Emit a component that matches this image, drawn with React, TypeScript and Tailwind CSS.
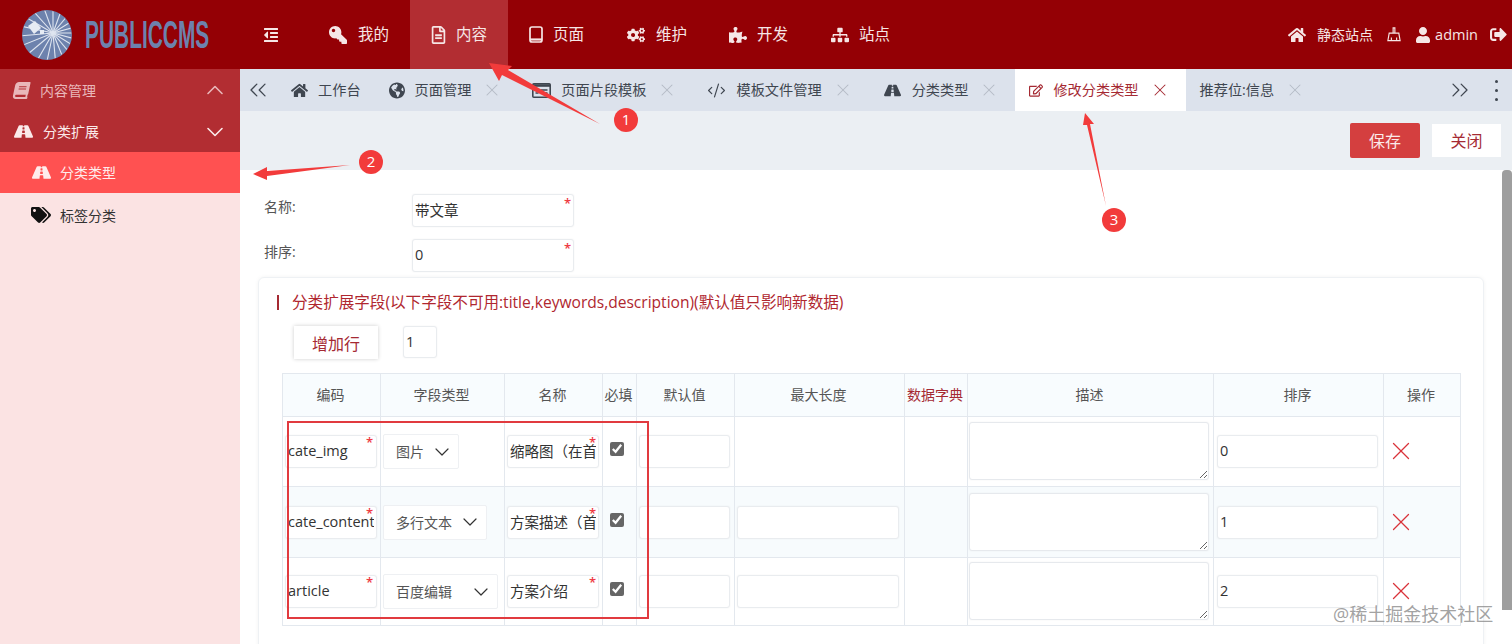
import React from "react";
import {
  FaBook, FaCogs, FaGlobeAmericas, FaHome, FaKey, FaOutdent, FaPuzzlePiece, FaRegEdit, FaRegFileAlt,
  FaRoad, FaSignOutAlt, FaSitemap, FaTags, FaUser,
} from "react-icons/fa";
import { ChevronDown, ChevronUp, ChevronsLeft, ChevronsRight, CodeXml, X } from "lucide-react";

function Logo() {
  const rays = [0, 15, 32, 50, 68, 85, 102, 120, 140, 158, 175, 192, 210, 228, 250, 270, 290, 310, 328, 345];
  return (
    <svg width="50" height="50" viewBox="0 0 50 50" className="shrink-0">
      <defs>
        <clipPath id="logo-clip">
          <circle cx="25" cy="25" r="24.5" />
        </clipPath>
      </defs>
      <circle cx="25" cy="25" r="25" fill="#6d82ad" />
      <g clipPath="url(#logo-clip)">
        {rays.map((a) => (
          <line
            key={a}
            x1="31"
            y1="23"
            x2={31 + 50 * Math.cos((a * Math.PI) / 180)}
            y2={23 + 50 * Math.sin((a * Math.PI) / 180)}
            stroke="#dfe5f0"
            strokeWidth="1.1"
          />
        ))}
      </g>
      <path d="M6 16l7-5 6 7-7 6z" fill="#e6ebf4" />
      <rect x="18" y="20" width="4" height="4" fill="#e6ebf4" />
    </svg>
  );
}

function Tablet() {
  return (
    <svg width="14" height="17" viewBox="0 0 14 17" fill="none" stroke="currentColor" strokeWidth="1.7">
      <rect x="1" y="1" width="12" height="15" rx="2" />
      <path d="M1 13.5h12" strokeWidth="2.2" />
    </svg>
  );
}

function TemplateIcon() {
  return (
    <svg width="19" height="15" viewBox="0 0 19 15" fill="none" stroke="currentColor">
      <rect x="0.8" y="0.8" width="17.4" height="13.4" rx="1" strokeWidth="1.6" />
      <path d="M1 2.5h17" strokeWidth="2.6" />
      <path d="M3.5 7h3M3.5 10h3M8.5 7h7M8.5 10h7" strokeWidth="1.6" />
    </svg>
  );
}

function NavItem({ icon, label, w, active }: { icon: React.ReactNode; label: string; w: string; active?: boolean }) {
  return (
    <div className={`flex h-full items-center gap-[10px] px-[21px] ${active ? "bg-[#b22d32]" : ""}`}>
      <span className={`flex justify-center text-[18px] ${w}`}>{icon}</span>
      <span className="text-[15.5px]">{label}</span>
    </div>
  );
}

function Tab({ icon, w = "", label, closable = true, active }: { icon?: React.ReactNode; w?: string; label: string; closable?: boolean; active?: boolean }) {
  return (
    <div
      className={`flex h-full shrink-0 items-center pl-[14px] ${closable ? "pr-[20px]" : "pr-[14px]"} ${active ? "bg-white text-[#a52a33]" : "text-[#3f4650]"}`}
    >
      {icon && <span className={`mr-[10px] flex justify-center text-[17px] leading-none ${w}`}>{icon}</span>}
      <span className="text-[14.2px]">{label}</span>
      {closable && (
        <X size={20} strokeWidth={1.25} className={`ml-[11px] -mr-[4px] ${active ? "text-[#a52a33]" : "text-[#b4bbc6]"}`} />
      )}
    </div>
  );
}

function Star({ className = "top-[3px] right-[3px]" }: { className?: string }) {
  return <span className={`pointer-events-none absolute text-[13px] font-semibold leading-none text-[#ee3a43] ${className}`}>*</span>;
}

function Field({ value = "", className = "", star, starClass }: { value?: string; className?: string; star?: boolean; starClass?: string }) {
  return (
    <div className={`relative ${className}`}>
      <input
        readOnly
        value={value}
        className="h-full w-full rounded-[3px] border border-[#e9ecef] bg-white px-[2px] pb-[2px] text-[14.5px] text-[#333] shadow-[0_0_2px_rgba(0,0,0,0.06)] outline-none"
      />
      {star && <Star className={starClass} />}
    </div>
  );
}

function SelectBox({ label, w }: { label: string; w: string }) {
  return (
    <div className={`flex h-[35px] items-center justify-between rounded-[2px] border border-[#eef0f3] bg-white pl-[12px] pr-[4px] text-[14px] text-[#555] ${w}`}>
      <span>{label}</span>
      <ChevronDown size={24} strokeWidth={1.2} className="text-[#333]" />
    </div>
  );
}

const th = "border border-[#e3e8ee] bg-[#f8fcfe] pb-[1px] pr-[2px] text-center text-[14px] font-normal text-[#555]";
const td = "border border-[#e3e8ee] p-0 align-middle";

const rows = [
  { h: "h-[70px]", code: "cate_img", sel: "图片", selW: "w-[76px]", name: "缩略图（在首", max: false, sort: "0", bg: "bg-white" },
  { h: "h-[71px]", code: "cate_content", sel: "多行文本", selW: "w-[104px]", name: "方案描述（首", max: true, sort: "1", bg: "bg-[#f7fbfd]" },
  { h: "h-[68px]", code: "article", sel: "百度编辑", selW: "w-[115px]", name: "方案介绍", max: true, sort: "2", bg: "bg-white" },
];

function Broom() {
  return (
    <svg width="14" height="17" viewBox="0 0 16 17" fill="none" stroke="currentColor" strokeWidth="1.3">
      <path d="M7 1h2v6H7zM2.5 7h11L15 15.5H1zM5 15.5V12M11 15.5V12" />
    </svg>
  );
}

export default function App() {
  return (
    <div className="relative flex h-[644px] w-[1512px] flex-col overflow-hidden bg-white font-['Open_Sans','Noto_Sans_CJK_SC',sans-serif]">
      <header className="flex h-[69px] shrink-0 items-center bg-[#940005] text-[#f6e6e6]">
        <div className="flex w-[251px] items-center pl-[22px]">
          <Logo />
          <span className="ml-[13px] origin-left scale-x-[0.55] font-['Liberation_Sans',sans-serif] text-[38px] font-bold leading-none text-[#6d82ad]">
            PUBLICCMS
          </span>
        </div>
        <FaOutdent className="ml-[12px] text-[16px]" />
        <div className="ml-[28px] flex h-full items-center">
          <NavItem icon={<FaKey className="-scale-x-100" />} w="w-[20px]" label="我的" />
          <NavItem icon={<FaRegFileAlt />} w="w-[15px]" label="内容" active />
          <NavItem icon={<Tablet />} w="w-[14px]" label="页面" />
          <NavItem icon={<FaCogs />} w="w-[20px]" label="维护" />
          <NavItem icon={<FaPuzzlePiece />} w="w-[18px]" label="开发" />
          <NavItem icon={<FaSitemap />} w="w-[19px]" label="站点" />
        </div>
        <div className="ml-auto flex items-center pr-[5px] text-[14px]">
          <FaHome className="text-[18px]" />
          <span className="ml-[11px]">静态站点</span>
          <span className="ml-[14px]"><Broom /></span>
          <FaUser className="ml-[14px] text-[16px]" />
          <span className="ml-[4px] text-[14.5px]">admin</span>
          <FaSignOutAlt className="ml-[12px] text-[17px]" />
        </div>
      </header>

      <div className="flex min-h-0 flex-1">
        <aside className="w-[240px] shrink-0 bg-[#fbe3e3] text-[14px]">
          <div className="flex h-[42px] items-center bg-[#b22d32] pl-[13px] pr-[11px] text-[#e9b7b9]">
            <FaBook className="-skew-x-12 text-[17px]" />
            <span className="ml-[10px]">内容管理</span>
            <ChevronUp size={28} strokeWidth={1.4} className="ml-auto" />
          </div>
          <div className="flex h-[41px] items-center bg-[#b22d32] pl-[14px] pr-[11px] text-[#fbeaea]">
            <FaRoad className="text-[19px]" />
            <span className="ml-[10px]">分类扩展</span>
            <ChevronDown size={28} strokeWidth={1.4} className="ml-auto" />
          </div>
          <div className="flex h-[41px] items-center bg-[#ff5151] pl-[32px] text-[#ffecec]">
            <FaRoad className="text-[19px]" />
            <span className="ml-[9px]">分类类型</span>
          </div>
          <div className="flex h-[44px] items-center pl-[31px] text-[#333]">
            <FaTags className="text-[20px] text-[#111]" />
            <span className="ml-[9px]">标签分类</span>
          </div>
        </aside>

        <main className="min-w-0 flex-1">
          <div className="flex h-[42px] items-center bg-[#dce2ec]">
            <ChevronsLeft size={28} strokeWidth={1.1} className="ml-[4px] text-[#3f4650]" />
            <div className="ml-[4px] flex h-full flex-1 items-center">
              <Tab icon={<FaHome />} w="w-[18px]" label="工作台" closable={false} />
              <Tab icon={<FaGlobeAmericas />} w="w-[16px]" label="页面管理" />
              <Tab icon={<TemplateIcon />} w="w-[19px]" label="页面片段模板" />
              <Tab icon={<CodeXml size={21} strokeWidth={1.5} />} w="w-[19px]" label="模板文件管理" />
              <Tab icon={<FaRoad />} w="w-[19px]" label="分类类型" />
              <Tab icon={<FaRegEdit className="text-[15px]" />} w="w-[14px]" label="修改分类类型" active />
              <Tab label="推荐位:信息" />
            </div>
            <ChevronsRight size={28} strokeWidth={1.1} className="mr-[21px] text-[#3f4650]" />
            <div className="mr-[14px] flex flex-col gap-[6px]">
              <span className="size-[3px] rounded-full bg-[#3f4650]" />
              <span className="size-[3px] rounded-full bg-[#3f4650]" />
              <span className="size-[3px] rounded-full bg-[#3f4650]" />
            </div>
          </div>

          <div className="flex h-[59px] items-center justify-end gap-[12px] bg-[#ebeff3] pr-[11px]">
            <button className="h-[35px] w-[70px] rounded-[2px] bg-[#d43f3f] text-[16px] text-[#fbeaea]">保存</button>
            <button className="h-[33px] w-[69px] bg-white text-[16px] text-[#a52a33]">关闭</button>
          </div>

          <div className="pl-[18px] pt-[24px]">
            <div className="flex h-[33px] items-start">
              <label className="mt-[2px] w-[154px] pl-[6px] text-[14px] text-[#555]">名称:</label>
              <Field value="带文章" star className="h-[33px] w-[162px]" />
            </div>
            <div className="mt-[12px] flex h-[33px] items-start">
              <label className="mt-[2px] w-[154px] pl-[6px] text-[14px] text-[#555]">排序:</label>
              <Field value="0" star className="h-[33px] w-[162px]" />
            </div>

            <section className="mt-[5px] h-[400px] w-[1226px] rounded-[6px] border border-[#eef1f4] pl-[18px] pt-[13px] shadow-[0_0_4px_rgba(0,0,0,0.05)]">
              <div className="flex items-center">
                <span className="mr-[13px] h-[15px] w-[2px] bg-[#a52a33]" />
                <span className="text-[15.6px] tracking-[-0.02px] text-[#b0272f]">
                  分类扩展字段(以下字段不可用:title,keywords,description)(默认值只影响新数据)
                </span>
              </div>
              <div className="mt-[12px] flex pl-[17px]">
                <button className="h-[33px] w-[84px] bg-white pt-[3px] text-[16px] text-[#a52a33] shadow-[0_0_4px_rgba(0,0,0,0.2)]">增加行</button>
                <Field value="1" className="ml-[25px] h-[32px] w-[34px]" />
              </div>
              <table className="ml-[5px] mt-[14px] w-[1178px] table-fixed border-collapse">
                <colgroup>
                  <col className="w-[98px]" />
                  <col className="w-[124px]" />
                  <col className="w-[98px]" />
                  <col className="w-[34px]" />
                  <col className="w-[98px]" />
                  <col className="w-[170px]" />
                  <col className="w-[63px]" />
                  <col className="w-[246px]" />
                  <col className="w-[170px]" />
                  <col className="w-[77px]" />
                </colgroup>
                <thead>
                  <tr className="h-[43px]">
                    <th className={th}>编码</th>
                    <th className={th}>字段类型</th>
                    <th className={th}>名称</th>
                    <th className={th}>必填</th>
                    <th className={th}>默认值</th>
                    <th className={th}>最大长度</th>
                    <th className={`${th} !text-[#a52a33]`}>数据字典</th>
                    <th className={th}>描述</th>
                    <th className={th}>排序</th>
                    <th className={th}>操作</th>
                  </tr>
                </thead>
                <tbody>
                  {rows.map((r) => (
                    <tr key={r.code} className={`${r.h} ${r.bg}`}>
                      <td className={td}>
                        <Field value={r.code} star starClass="top-[1px] right-[4px]" className="ml-[2px] h-[33px] w-[92px]" />
                      </td>
                      <td className={td}>
                        <div className="pl-[2px]"><SelectBox label={r.sel} w={r.selW} /></div>
                      </td>
                      <td className={td}>
                        <Field value={r.name} star starClass="top-[1px] right-[3px]" className="ml-[2px] h-[33px] w-[92px]" />
                      </td>
                      <td className={td}>
                        <div className="flex pb-[5px] pl-[7px]">
                          <input type="checkbox" readOnly checked className="size-[14px] accent-[#666]" />
                        </div>
                      </td>
                      <td className={td}>
                        <Field className="ml-[2px] h-[33px] w-[91px]" />
                      </td>
                      <td className={td}>
                        {r.max && <Field className="ml-[2px] h-[33px] w-[162px]" />}
                      </td>
                      <td className={td} />
                      <td className={td}>
                        <textarea
                          readOnly
                          className="mb-[1px] ml-[1px] block h-[58px] w-[240px] rounded-[3px] border border-[#e6e9ed] bg-white shadow-[0_0_2px_rgba(0,0,0,0.06)] outline-none"
                        />
                      </td>
                      <td className={td}>
                        <Field value={r.sort} className="ml-[3px] h-[33px] w-[161px]" />
                      </td>
                      <td className={td}>
                        <X size={30} strokeWidth={1} className="mb-[1px] ml-[2px] text-[#d9333a]" />
                      </td>
                    </tr>
                  ))}
                </tbody>
              </table>
            </section>
          </div>
        </main>
      </div>

      {/* scrollbar */}
      <div className="absolute left-[1502px] top-[170px] h-[440px] w-[10px] rounded-t-[4px] bg-[#9e9e9e]" />

      {/* annotations drawn over the screenshot */}
      <svg className="pointer-events-none absolute inset-0" width="1512" height="644" viewBox="0 0 1512 644">
        <polygon points="489,63 512,66 508,70 600,124 502,75 499,81" fill="#f23b3b" />
        <polygon points="253,174 267,167 267,171 350,165 267,176 267,180" fill="#f23b3b" />
        <polygon points="1085,113 1094,124 1090,124 1106,206 1087,125 1083,125" fill="#f23b3b" />
        <circle cx="626" cy="120" r="12" fill="#f23b3b" />
        <circle cx="371" cy="162" r="12" fill="#f23b3b" />
        <circle cx="1114" cy="220" r="12" fill="#f23b3b" />
        <g fill="#ffffff" fontSize="15" textAnchor="middle" fontFamily="Open Sans, sans-serif">
          <text x="626" y="125">1</text>
          <text x="371" y="167">2</text>
          <text x="1114" y="225">3</text>
        </g>
        <rect x="288" y="422" width="360" height="196" fill="none" stroke="#e13a3f" strokeWidth="2" />
      </svg>

      <span className="pointer-events-none absolute left-[1333px] top-[601px] text-[18px] leading-[26px] text-[#8a8a8a]/80">
        @稀土掘金技术社区
      </span>
    </div>
  );
}
